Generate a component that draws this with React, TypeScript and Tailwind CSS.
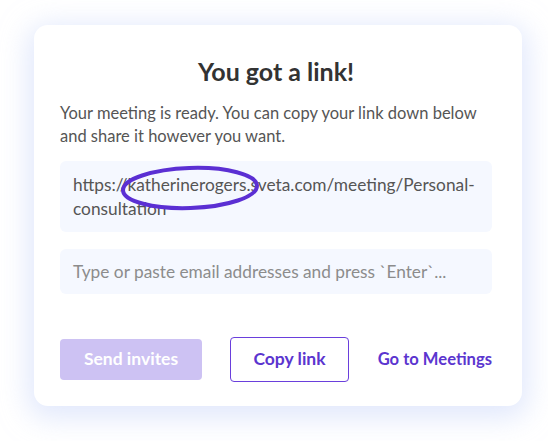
export default function App() {
  return (
    <div className="w-[548px] h-[441px] bg-white px-[34px] pt-[25px]" style={{ fontFamily: 'Lato, "Noto Sans", sans-serif' }}>
      <div className="w-[488px] h-[381px] rounded-[14px] bg-white shadow-[0_6px_28px_6px_rgba(200,214,250,0.55)] pl-[26px] pr-[30px] pt-[29px]">
        <h1 className="text-center text-[25px] font-bold text-[#333] leading-[34px]">You got a link!</h1>
        <p className="mt-[14px] text-[16.5px] leading-[23px] text-[#555]">
          Your meeting is ready. You can copy your link down below and share it however you want.
        </p>
        <div className="relative mt-[13px] h-[71px] rounded-[6px] bg-[#f5f8ff] px-[13px] pt-[12px] text-[17.3px] leading-[24px] text-[#555]">
          https://katherinerogers.sveta.com/meeting/Personal-consultation
          <svg className="absolute left-[59px] top-[3px]" width="142" height="48" viewBox="0 0 142 48">
            <ellipse cx="71" cy="24" rx="67" ry="20" fill="none" stroke="#5b2fd3" strokeWidth="4" transform="rotate(-2 71 24)" />
          </svg>
        </div>
        <div className="mt-[17px] flex h-[45px] items-center rounded-[6px] bg-[#f5f8ff] px-[13px] text-[17.3px] text-[#8c8c8c]">
          Type or paste email addresses and press `Enter`...
        </div>
        <div className="mt-[43px] flex items-center">
          <button className="h-[41px] w-[142px] rounded-[4px] bg-[#cdc2f3] text-[17.5px] font-bold text-white">Send invites</button>
          <button className="ml-[28px] h-[45px] w-[119px] rounded-[4px] border border-[#6a3fdc] bg-white text-[17.5px] font-bold text-[#5b35cf]">Copy link</button>
          <button className="ml-auto text-[16.6px] font-bold text-[#5b35cf]">Go to Meetings</button>
        </div>
      </div>
    </div>
  );
}
